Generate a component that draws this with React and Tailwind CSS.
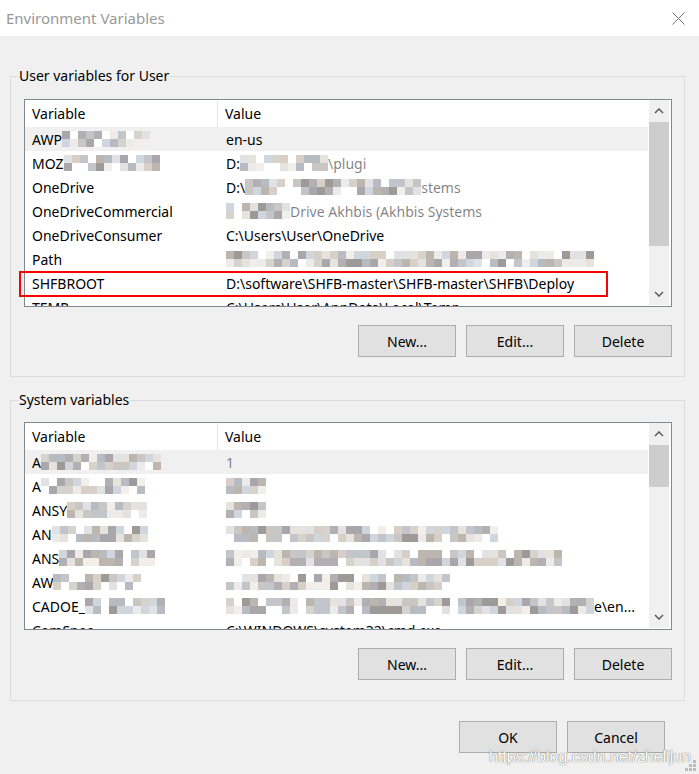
import React from "react";

const palette = [
  "bg-[#c9c6c4]",
  "bg-[#b3b0b4]",
  "bg-[#d6d2cc]",
  "bg-[#e6e2dc]",
  "bg-[#a9a7ab]",
  "bg-[#cfd6de]",
  "bg-[#bdb6ae]",
  "bg-[#e2e2e4]",
  "bg-[#f2eee9]",
  "bg-[#b7bcc2]",
  "bg-[#9d9a98]",
  "bg-[#d8d0c6]",
  "bg-white",
  "bg-white",
  "bg-[#ecebe9]",
  "bg-[#c2c5c9]",
];

function rnd(seed, i) {
  const x = Math.sin(seed * 9301 + i * 49297 + 17) * 233280;
  return x - Math.floor(x);
}

// pixelated blur block, like the censored bits in the screenshot
function Mosaic({ n, seed }) {
  const rows = [0, 1];
  return (
    <span className="inline-flex flex-col">
      {rows.map((r) => (
        <span key={r} className="flex">
          {Array.from({ length: n }).map((_, i) => (
            <span
              key={i}
              className={"w-[8px] h-[8px] " + palette[Math.floor(rnd(seed + r * 31, i) * palette.length)]}
            />
          ))}
        </span>
      ))}
    </span>
  );
}

function Cell({ parts, seed }) {
  return (
    <span className="flex items-center whitespace-nowrap">
      {parts.map((p, i) =>
        typeof p === "string" ? (
          <span key={i}>{p}</span>
        ) : p.t ? (
          <span key={i} className="text-black/50">
            {p.t}
          </span>
        ) : (
          <Mosaic key={i} n={p.m} seed={seed * 7 + i} />
        )
      )}
    </span>
  );
}

const userVars = [
  { v: ["AWP", { m: 11 }], val: ["en-us"], sel: true },
  { v: ["MOZ", { m: 12 }], val: ["D:", { m: 11 }, { t: "\\plugi" }] },
  { v: ["OneDrive"], val: ["D:\\", { m: 22 }, { t: "stems" }] },
  { v: ["OneDriveCommercial"], val: [{ m: 8 }, { t: "Drive Akhbis (Akhbis Systems" }] },
  { v: ["OneDriveConsumer"], val: ["C:\\Users\\User\\OneDrive"] },
  { v: ["Path"], val: [{ m: 46 }] },
  { v: ["SHFBROOT"], val: ["D:\\software\\SHFB-master\\SHFB-master\\SHFB\\Deploy"] },
  { v: ["TEMP"], val: ["C:\\Users\\User\\AppData\\Local\\Temp"] },
];

const sysVars = [
  { v: ["A", { m: 15 }], val: [{ t: "1" }], sel: true },
  { v: ["A", { m: 13 }], val: [{ m: 5 }] },
  { v: ["ANSY", { m: 10 }], val: [{ m: 5 }] },
  { v: ["AN", { m: 12 }], val: [{ m: 34 }] },
  { v: ["ANS", { m: 12 }], val: [{ m: 42 }] },
  { v: ["AW", { m: 11 }], val: [{ m: 28 }] },
  { v: ["CADOE_", { m: 10 }], val: [{ m: 46 }, "e\\en..."] },
  { v: ["ComSpec"], val: ["C:\\WINDOWS\\system32\\cmd.exe"] },
];

function Chevron({ down }) {
  return (
    <svg width="10" height="6" viewBox="0 0 10 6">
      <path
        d={down ? "M1 1 L5 5 L9 1" : "M1 5 L5 1 L9 5"}
        fill="none"
        stroke="#606060"
        strokeWidth="1.6"
      />
    </svg>
  );
}

function VarList({ rows, thumbH, seedBase }) {
  return (
    <div className="flex h-[208px] w-[648px] border border-[#828790] bg-white overflow-hidden">
      <div className="w-[623px] overflow-hidden">
        <div className="flex h-[27px] items-center bg-white">
          <div className="w-[193px] h-full flex items-center pl-[7px] border-r border-[#e5e5e5]">
            Variable
          </div>
          <div className="pl-[7px]">Value</div>
        </div>
        {rows.map((r, i) => (
          <div key={i} className={"flex h-[24px] shrink-0 items-center " + (r.sel ? "bg-[#f0f0f0]" : "bg-white")}>
            <div className="w-[194px] pl-[7px] shrink-0">
              <Cell parts={r.v} seed={seedBase + i} />
            </div>
            <div className="pl-[7px]">
              <Cell parts={r.val} seed={seedBase + i + 50} />
            </div>
          </div>
        ))}
      </div>
      <div className="ml-[1px] mb-[1px] w-[20px] flex flex-col bg-[#f0f0f0]">
        <div className="h-[22px] flex items-center justify-center">
          <Chevron />
        </div>
        <div className="flex-1 flex flex-col">
          <div className="bg-[#cdcdcd]" style={{ height: thumbH }} />
        </div>
        <div className="h-[22px] flex items-center justify-center">
          <Chevron down />
        </div>
      </div>
    </div>
  );
}

function Btn({ children }) {
  return (
    <div className="w-[98px] h-[32px] flex items-center justify-center bg-[#e1e1e1] border border-[#adadad] text-black">
      {children}
    </div>
  );
}

function Group({ title, children, className }) {
  return (
    <fieldset className={"border border-[#dcdcdc] " + className}>
      <legend className="ml-[7px] px-[1px] leading-[20px] text-black">{title}</legend>
      {children}
    </fieldset>
  );
}

export default function App() {
  return (
    <div className="relative w-[699px] h-[774px] overflow-hidden bg-[#f0f0f0] font-['Noto_Sans',sans-serif] text-[14px] text-black">
      {/* title bar */}
      <div className="h-[36px] bg-white flex items-center justify-between pl-[6px] pr-[14px]">
        <span className="text-[15px] text-[#999999]">Environment Variables</span>
        <svg width="13" height="13" viewBox="0 0 13 13">
          <path d="M0.5 0.5 L12.5 12.5 M12.5 0.5 L0.5 12.5" stroke="#777" strokeWidth="1" />
        </svg>
      </div>

      <div className="pl-[10px] pr-[14px]">
        <Group title="User variables for User" className="mt-[30px] pb-[19px]">
          <div className="pl-[13px] pr-[12px] mt-[13px]">
            <VarList rows={userVars} thumbH={124} seedBase={1} />
            <div className="flex justify-end gap-[10px] mt-[18px]">
              <Btn>New...</Btn>
              <Btn>Edit...</Btn>
              <Btn>Delete</Btn>
            </div>
          </div>
        </Group>

        <Group title="System variables" className="mt-[13px] pb-[20px]">
          <div className="pl-[13px] pr-[12px] mt-[12px]">
            <VarList rows={sysVars} thumbH={42} seedBase={20} />
            <div className="flex justify-end gap-[10px] mt-[18px]">
              <Btn>New...</Btn>
              <Btn>Edit...</Btn>
              <Btn>Delete</Btn>
            </div>
          </div>
        </Group>

        <div className="flex justify-end gap-[10px] mt-[20px] pr-[20px]">
          <Btn>OK</Btn>
          <Btn>Cancel</Btn>
        </div>
      </div>

      {/* red highlight drawn over the SHFBROOT row */}
      <div className="absolute left-[19px] top-[271px] w-[589px] h-[26px] border-2 border-[#ff0000]" />

      {/* watermark */}
      <div className="absolute left-[489px] top-[749px] font-['Liberation_Sans',sans-serif] text-[16px] leading-[16px] text-white [text-shadow:0_0_1px_#7a7a7a,0_0_1px_#7a7a7a]">
        https://blog.csdn.net/zhelijun
      </div>

      {/* resize grip */}
      <svg className="absolute right-[2px] bottom-[2px]" width="12" height="12" viewBox="0 0 12 12">
        <rect x="8" y="0" width="3" height="3" fill="#bcbcbc" />
        <rect x="4" y="4" width="3" height="3" fill="#bcbcbc" />
        <rect x="8" y="4" width="3" height="3" fill="#bcbcbc" />
        <rect x="0" y="8" width="3" height="3" fill="#bcbcbc" />
        <rect x="4" y="8" width="3" height="3" fill="#bcbcbc" />
        <rect x="8" y="8" width="3" height="3" fill="#bcbcbc" />
      </svg>
    </div>
  );
}
